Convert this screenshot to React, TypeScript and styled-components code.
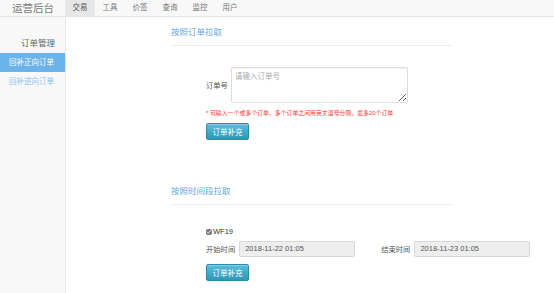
import styled, { createGlobalStyle } from "styled-components";

const GlobalStyle = createGlobalStyle`
    html, body {
        margin: 0;
        padding: 0;
        background: #fff;
    }
    body {
        font-family: "Liberation Sans", "Noto Sans CJK SC", sans-serif;
        color: #333;
    }
`;

const Page = styled.div`
    display: flex;
    flex-direction: column;
    height: 293px;
    overflow: hidden;
`;

const TopBar = styled.div`
    display: flex;
    align-items: stretch;
    height: 16px;
    background: #f8f8f8;
    border-bottom: 1px solid #e7e7e7;
    box-shadow: 0 1px 2px rgba(0, 0, 0, 0.04);
    flex-shrink: 0;
`;

const Brand = styled.div`
    width: 65px;
    padding-left: 12px;
    box-sizing: border-box;
    font-size: 10.5px;
    line-height: 16px;
    color: #777;
`;

const NavItem = styled.div<{ $active?: boolean }>`
    padding: 0 7.5px;
    font-size: 7.5px;
    line-height: 16px;
    background: ${(p) => (p.$active ? "#e7e7e7" : "transparent")};
    color: ${(p) => (p.$active ? "#555" : "#777")};
`;

const Body = styled.div`
    display: flex;
    flex: 1;
`;

const Sidebar = styled.div`
    width: 65px;
    flex-shrink: 0;
    background: #f8f8f8;
    border-right: 1px solid #e7e7e7;
    padding-top: 20px;
    display: flex;
    flex-direction: column;
`;

const SideHead = styled.div`
    text-align: right;
    padding-right: 10px;
    font-size: 8.5px;
    line-height: 12px;
    color: #666;
    margin-bottom: 4px;
`;

const SideItem = styled.div<{ $active?: boolean }>`
    height: 19px;
    line-height: 19px;
    padding-left: 9px;
    font-size: 7.5px;
    background: ${(p) => (p.$active ? "#6cb3ea" : "transparent")};
    color: ${(p) => (p.$active ? "#fff" : "#8cc1ee")};
`;

const Main = styled.div`
    flex: 1;
    padding-left: 105px;
    padding-top: 9px;
    display: flex;
    flex-direction: column;
`;

const Section = styled.div<{ $gap?: number }>`
    display: flex;
    flex-direction: column;
    margin-top: ${(p) => p.$gap ?? 0}px;
`;

const SectionTitle = styled.div`
    font-size: 8.5px;
    line-height: 12px;
    color: #5ea7e2;
    padding-bottom: 7px;
    width: 282px;
    border-bottom: 1px solid #eee;
`;

const Content = styled.div`
    padding-left: 35px;
    display: flex;
    flex-direction: column;
    align-items: flex-start;
`;

const OrderRow = styled.div`
    display: flex;
    align-items: center;
    gap: 3px;
    margin-top: 21px;
`;

const Label = styled.span`
    font-size: 7.3px;
    color: #555;
    white-space: nowrap;
`;

const TextArea = styled.textarea`
    width: 177px;
    height: 36px;
    box-sizing: border-box;
    border: 1px solid #ddd;
    border-radius: 2px;
    padding: 2px 3px;
    font-family: inherit;
    font-size: 7.5px;
    color: #555;
    box-shadow: inset 0 1px 1px rgba(0, 0, 0, 0.05);
    outline: none;
    &::placeholder {
        color: #aaa;
    }
`;

const Hint = styled.div`
    margin-top: 6px;
    font-size: 5.9px;
    line-height: 8px;
    color: #f33;
    white-space: nowrap;
`;

const Button = styled.button<{ $gap: number }>`
    margin-top: ${(p) => p.$gap}px;
    width: 43px;
    height: 17px;
    padding: 0;
    border: 1px solid #2a8bad;
    border-radius: 2px;
    background: linear-gradient(#58c0df, #2f96b4);
    color: #fff;
    font-family: inherit;
    font-size: 7.5px;
    box-shadow: inset 0 1px 0 rgba(255, 255, 255, 0.25);
`;

const CheckRow = styled.label`
    margin-top: 22px;
    display: flex;
    align-items: center;
    gap: 1px;
    font-size: 7.5px;
    line-height: 10px;
    color: #333;
`;

const Check = styled.input`
    width: 6px;
    height: 6px;
    margin: 0;
    accent-color: #777;
`;

const TimeRow = styled.div`
    margin-top: 4px;
    display: flex;
    align-items: center;
`;

const TimeField = styled.div<{ $gap?: number }>`
    display: flex;
    align-items: center;
    gap: 4px;
    margin-left: ${(p) => p.$gap ?? 0}px;
`;

const TimeInput = styled.div`
    width: 116px;
    height: 16px;
    box-sizing: border-box;
    border: 1px solid #d8d8d8;
    border-radius: 2px;
    background: #eee;
    padding-left: 5px;
    font-size: 7.5px;
    line-height: 14px;
    color: #555;
`;

const navItems = ["交易", "工具", "价签", "查询", "监控", "用户"];

export default function App() {
    return (
        <Page>
            <GlobalStyle />
            <TopBar>
                <Brand>运营后台</Brand>
                {navItems.map((n, i) => (
                    <NavItem key={n} $active={i === 0}>{n}</NavItem>
                ))}
            </TopBar>
            <Body>
                <Sidebar>
                    <SideHead>订单管理</SideHead>
                    <SideItem $active>回补正向订单</SideItem>
                    <SideItem>回补逆向订单</SideItem>
                </Sidebar>
                <Main>
                    <Section>
                        <SectionTitle>按照订单拉取</SectionTitle>
                        <Content>
                            <OrderRow>
                                <Label>订单号</Label>
                                <TextArea placeholder="请输入订单号" />
                            </OrderRow>
                            <Hint>* 可输入一个或多个订单，多个订单之间用英文逗号分隔，最多20个订单</Hint>
                            <Button $gap={6}>订单补充</Button>
                        </Content>
                    </Section>
                    <Section $gap={45}>
                        <SectionTitle>按照时间段拉取</SectionTitle>
                        <Content>
                            <CheckRow>
                                <Check type="checkbox" defaultChecked />
                                WF19
                            </CheckRow>
                            <TimeRow>
                                <TimeField>
                                    <Label>开始时间</Label>
                                    <TimeInput>2018-11-22 01:05</TimeInput>
                                </TimeField>
                                <TimeField $gap={26}>
                                    <Label>结束时间</Label>
                                    <TimeInput>2018-11-23 01:05</TimeInput>
                                </TimeField>
                            </TimeRow>
                            <Button $gap={7}>订单补充</Button>
                        </Content>
                    </Section>
                </Main>
            </Body>
        </Page>
    );
}
